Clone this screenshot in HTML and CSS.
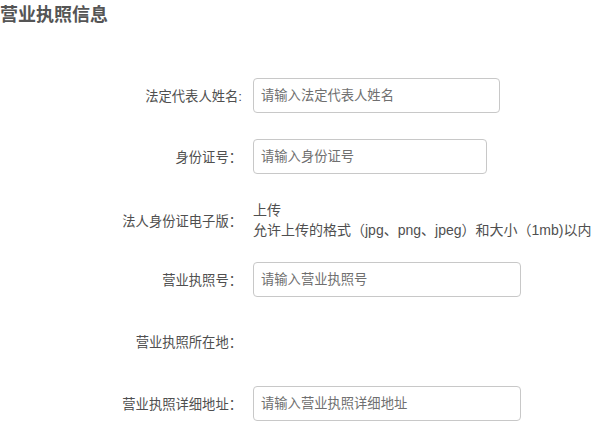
FILE: index.html
```html
<!DOCTYPE html>
<html lang="zh-CN">
<head>
<meta charset="utf-8">
<title>营业执照信息</title>
<link rel="stylesheet" href="styles.css">
</head>
<body>
<div class="page">
  <h3 class="title">营业执照信息</h3>
  <form class="form">
    <div class="row">
      <label class="label">法定代表人姓名:</label>
      <div class="content"><input class="input w247" type="text" placeholder="请输入法定代表人姓名"></div>
    </div>
    <div class="row">
      <label class="label">身份证号：</label>
      <div class="content"><input class="input w234" type="text" placeholder="请输入身份证号"></div>
    </div>
    <div class="row upload-row">
      <label class="label">法人身份证电子版：</label>
      <div class="content upload">
        <div class="upload-btn">上传</div>
        <div class="upload-tip">允许上传的格式（jpg、png、jpeg）和大小（1mb)以内</div>
      </div>
    </div>
    <div class="row">
      <label class="label">营业执照号：</label>
      <div class="content"><input class="input w268" type="text" placeholder="请输入营业执照号"></div>
    </div>
    <div class="row region-row">
      <label class="label">营业执照所在地：</label>
      <div class="content"></div>
    </div>
    <div class="row">
      <label class="label">营业执照详细地址：</label>
      <div class="content"><input class="input w268" type="text" placeholder="请输入营业执照详细地址"></div>
    </div>
  </form>
</div>
</body>
</html>
```

FILE: styles.css
```css
* { box-sizing: border-box; }
html, body {
  margin: 0;
  padding: 0;
  background: #fff;
  font-family: "Liberation Sans", "Noto Sans CJK SC", sans-serif;
  color: #555;
}
.page {
  width: 608px;
}
.title {
  margin: 0;
  font-size: 18px;
  line-height: 30px;
  font-weight: bold;
  color: #555;
}
.form {
  display: flex;
  flex-direction: column;
  gap: 26px;
  padding-top: 48px;
}
.row {
  display: flex;
  align-items: center;
  min-height: 35px;
}
.label {
  width: 242px;
  flex: none;
  text-align: right;
  font-size: 13.3px;
  color: #4f4f4f;
}
.content {
  margin-left: 11px;
  flex: 1;
  min-width: 0;
}
.input {
  display: block;
  height: 35px;
  padding: 0 7px;
  border: 1px solid #c8c8c8;
  border-radius: 4px;
  font-family: "Liberation Sans", "Noto Sans CJK SC", sans-serif;
  font-size: 13.3px;
  color: #555;
  outline: none;
  background: #fff;
}
.input::placeholder {
  color: #6f6f6f;
}
.w247 { width: 247px; }
.w234 { width: 234px; }
.w268 { width: 268px; }
.upload-row {
  margin-bottom: -4px;
}
.region-row {
  margin: 1px 0;
}
.upload {
  font-size: 14px;
  line-height: 20px;
  color: #4f4f4f;
  white-space: nowrap;
}
```
